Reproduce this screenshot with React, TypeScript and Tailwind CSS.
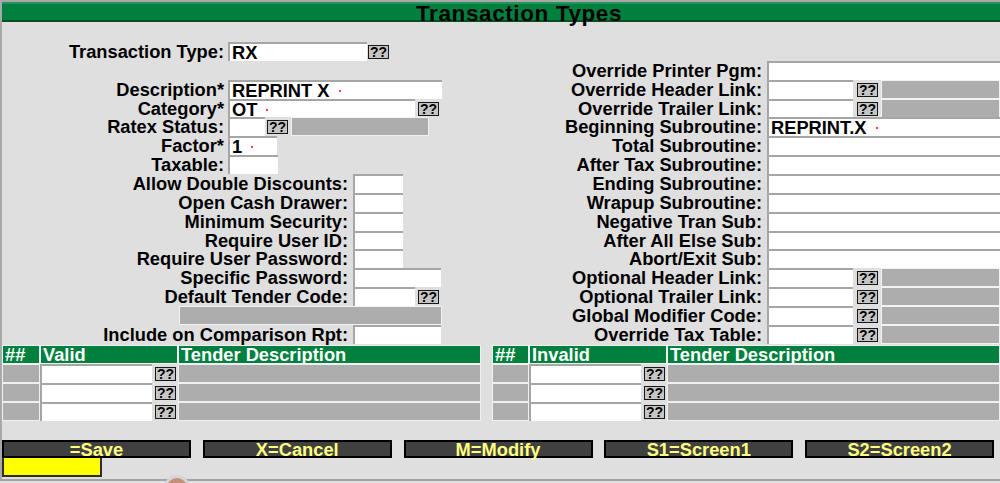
import React from "react";

// Transaction Types maintenance screen (legacy green/grey form)

function Dot() {
  return <span className="ml-[9px] inline-block h-[2px] w-[2px] bg-[#ff3b3b] align-[5px]" />;
}

function Q({ className = "ml-[3px]" }: { className?: string }) {
  return (
    <div
      className={`${className} mt-[3px] flex h-[14px] w-[21px] shrink-0 items-center justify-center self-start border border-[#161616] bg-[#c5c5c5] text-[14px] leading-none`}
    >
      ??
    </div>
  );
}

function Inp({ className = "", value, dot }: { className?: string; value?: string; dot?: boolean }) {
  return (
    <div
      className={`h-full shrink-0 whitespace-nowrap border-l-2 border-t-2 border-[#a6a6a6] bg-white pl-[2px] leading-[17.5px] ${className}`}
    >
      {value}
      {dot && <Dot />}
    </div>
  );
}

function Gray({ className = "" }: { className?: string }) {
  return <div className={`h-[19px] shrink-0 self-start border border-[#f3f3f3] bg-[#adadad] ${className}`} />;
}

function LabelA({ text }: { text: string }) {
  return <div className="w-[226px] shrink-0 whitespace-nowrap pr-[4px] pt-[1px] text-right leading-[18px]">{text}</div>;
}

function LabelB({ text }: { text: string }) {
  return <div className="w-[351px] shrink-0 whitespace-nowrap pr-[5px] pt-[1px] text-right leading-[18px]">{text}</div>;
}

function LabelR({ text }: { text: string }) {
  return <div className="w-[275px] shrink-0 whitespace-nowrap pr-[5px] pt-[1px] text-right leading-[18px]">{text}</div>;
}

const SUBS = [
  "Total Subroutine:",
  "After Tax Subroutine:",
  "Ending Subroutine:",
  "Wrapup Subroutine:",
  "Negative Tran Sub:",
  "After All Else Sub:",
  "Abort/Exit Sub:",
];

const LINKS = ["Optional Header Link:", "Optional Trailer Link:", "Global Modifier Code:", "Override Tax Table:"];

const SMALL = ["Allow Double Discounts:", "Open Cash Drawer:", "Minimum Security:", "Require User ID:", "Require User Password:"];

function LinkRow({ label }: { label: string }) {
  return (
    <div className="flex h-[18.86px]">
      <LabelR text={label} />
      <Inp className="w-[86px]" />
      <Q className="ml-[4px]" />
      <Gray className="ml-[3px] flex-1" />
    </div>
  );
}

function TenderTable({ title, codeW, className }: { title: string; codeW: string; className: string }) {
  return (
    <div className={`flex flex-col ${className}`}>
      <div className="flex h-[19px] text-white">
        <div className={`${codeW} shrink-0 border border-[#f0f0f0] bg-[#00803e] pl-[2px] leading-[18px]`}>##</div>
        <div className="w-[138px] shrink-0 border border-[#f0f0f0] bg-[#00803e] pl-[2px] leading-[18px]">{title}</div>
        <div className="min-w-0 flex-1 whitespace-nowrap border border-[#f0f0f0] bg-[#00803e] pl-[2px] leading-[18px]">
          Tender Description
        </div>
      </div>
      {[0, 1, 2].map((i) => (
        <div key={i} className="flex h-[19px]">
          <div className={`${codeW} shrink-0 border border-[#f0f0f0] bg-[#adadad]`} />
          <div className="flex w-[138px] shrink-0">
            <Inp className="w-[112px]" />
            <Q />
          </div>
          <div className="min-w-0 flex-1 border border-[#f0f0f0] bg-[#adadad]" />
        </div>
      ))}
    </div>
  );
}

const BUTTONS = ["=Save", "X=Cancel", "M=Modify", "S1=Screen1", "S2=Screen2"];

export default function App() {
  return (
    <div className="relative h-[483px] w-[1000px] overflow-hidden bg-[#dfdfdf] font-['Liberation_Sans',Arial,Helvetica,sans-serif] text-[18.3px] font-bold text-black">
      <div className="h-[2px] bg-[#a9a9a9]" />
      <div className="flex h-[477px] flex-col border-l-2 border-[#a9a9a9]">
        {/* Title bar */}
        <div className="h-[20px] shrink-0 whitespace-nowrap border-b-2 border-t-2 border-b-[#00501f] border-t-[#23955a] bg-[#00803e] pl-[414px] text-[22.5px] leading-[19px] tracking-[0.6px]">
          Transaction Types
        </div>

        {/* Form */}
        <div className="flex shrink-0 pt-[20px]">
          <div className="flex w-[490px] shrink-0 flex-col">
            <div className="flex h-[18.86px]">
              <LabelA text="Transaction Type:" />
              <Inp className="w-[139px]" value="RX" />
              <Q className="ml-[1px]" />
            </div>
            <div className="h-[18.86px]" />
            <div className="flex h-[18.86px]">
              <LabelA text="Description*" />
              <Inp className="w-[214px]" value="REPRINT X" dot />
            </div>
            <div className="flex h-[18.86px]">
              <LabelA text="Category*" />
              <Inp className="w-[187px]" value="OT" dot />
              <Q />
            </div>
            <div className="flex h-[18.86px]">
              <LabelA text="Ratex Status:" />
              <Inp className="w-[37px]" />
              <Q className="ml-[2px]" />
              <Gray className="ml-[3px] w-[138px]" />
            </div>
            <div className="flex h-[18.86px]">
              <LabelA text="Factor*" />
              <Inp className="w-[49px]" value="1" dot />
            </div>
            <div className="flex h-[18.86px]">
              <LabelA text="Taxable:" />
              <Inp className="w-[50px]" />
            </div>
            {SMALL.map((l) => (
              <div key={l} className="flex h-[18.86px]">
                <LabelB text={l} />
                <Inp className="w-[50px]" />
              </div>
            ))}
            <div className="flex h-[18.86px]">
              <LabelB text="Specific Password:" />
              <Inp className="w-[88px]" />
            </div>
            <div className="flex h-[18.86px]">
              <LabelB text="Default Tender Code:" />
              <Inp className="w-[62px]" />
              <Q />
            </div>
            <div className="flex h-[18.86px]">
              <div className="w-[177px] shrink-0" />
              <Gray className="w-[263px]" />
            </div>
            <div className="flex h-[18.86px]">
              <LabelB text="Include on Comparison Rpt:" />
              <Inp className="w-[88px]" />
            </div>
          </div>

          <div className="flex min-w-0 flex-1 flex-col">
            <div className="h-[18.86px]" />
            <div className="flex h-[18.86px]">
              <LabelR text="Override Printer Pgm:" />
              <Inp className="min-w-0 flex-1" />
            </div>
            <LinkRow label="Override Header Link:" />
            <LinkRow label="Override Trailer Link:" />
            <div className="flex h-[18.86px]">
              <LabelR text="Beginning Subroutine:" />
              <Inp className="min-w-0 flex-1" value="REPRINT.X" dot />
            </div>
            {SUBS.map((l) => (
              <div key={l} className="flex h-[18.86px]">
                <LabelR text={l} />
                <Inp className="min-w-0 flex-1" />
              </div>
            ))}
            {LINKS.map((l) => (
              <LinkRow key={l} label={l} />
            ))}
          </div>
        </div>

        {/* Valid / Invalid tender tables */}
        <div className="mt-[1px] flex shrink-0">
          <TenderTable title="Valid" codeW="w-[38px]" className="w-[479px] shrink-0" />
          <div className="w-[11px] shrink-0" />
          <TenderTable title="Invalid" codeW="w-[37px]" className="min-w-0 flex-1" />
        </div>

        {/* Function keys */}
        <div className="mt-[19px] flex shrink-0 gap-[11.75px]">
          {BUTTONS.map((b) => (
            <div
              key={b}
              className="h-[18px] w-[189px] shrink-0 border-2 border-black bg-[#404040] text-center leading-[15px] text-[#ffff80]"
            >
              {b}
            </div>
          ))}
        </div>
        <div className="h-[19px] w-[100px] shrink-0 border-2 border-t-0 border-[#2e2e2e] bg-[#ffff00]" />
      </div>
      <div className="h-[2px] bg-[#a3a3a3]" />

      {/* peeking user photo */}
      <div className="absolute left-[164px] top-[475px] h-[26px] w-[26px] rounded-full bg-[#d4d4d4] p-[3px]">
        <div className="h-full w-full rounded-full bg-[#c2907a]" />
      </div>
    </div>
  );
}
